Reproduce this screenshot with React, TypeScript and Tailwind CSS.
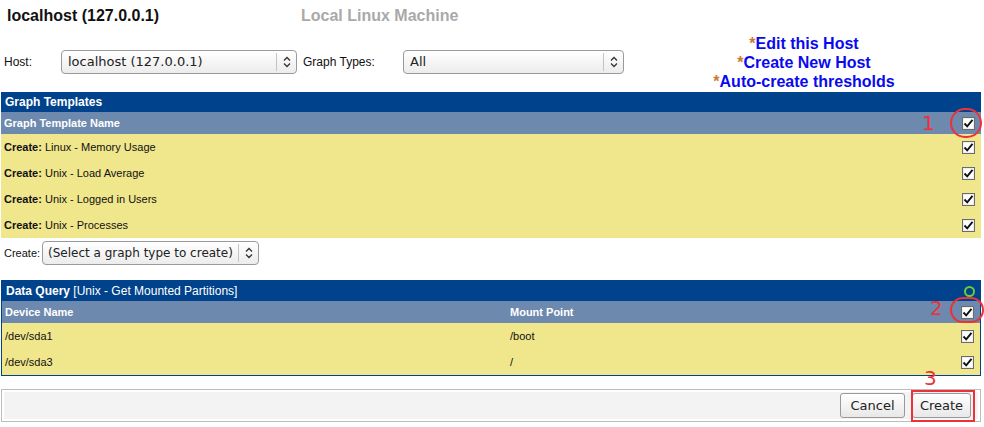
import React from 'react';

const sans = 'font-["Liberation_Sans",Arial,sans-serif]';
const deja = 'font-["DejaVu_Sans",sans-serif]';

function Check() {
  return (
    <span className="inline-flex h-[13px] w-[13px] items-center justify-center border border-[#6b6b6b] bg-white shadow-[inset_0_0_0_1px_#eee]">
      <svg width="11" height="11" viewBox="0 0 11 11">
        <path d="M1.5 5.5 L4.2 8.3 L9.5 1.8" fill="none" stroke="#111" strokeWidth="1.9" />
      </svg>
    </span>
  );
}

function Select({ value, className, textClass = 'text-[13px] pl-[6px]' }: { value: string; className: string; textClass?: string }) {
  return (
    <div
      className={`flex h-[24px] items-center rounded-[4px] border border-[#9a9a9a] bg-gradient-to-b from-white to-[#ececec] ${deja} text-[#222] ${className}`}
    >
      <span className={`flex-1 overflow-hidden whitespace-nowrap ${textClass}`}>{value}</span>
      <span className="flex h-[18px] w-[20px] shrink-0 items-center justify-center border-l border-[#c4c4c4]">
        <svg width="8" height="12" viewBox="0 0 8 12">
          <path d="M1 4.5 L4 1.5 L7 4.5 M1 7.5 L4 10.5 L7 7.5" fill="none" stroke="#333" strokeWidth="1.3" />
        </svg>
      </span>
    </div>
  );
}

function Ring({ className, label, labelClass }: { className: string; label: string; labelClass: string }) {
  return (
    <>
      <span className={`pointer-events-none absolute rounded-full border-[2.5px] border-[#ee3038] ${className}`} />
      <span className={`pointer-events-none absolute font-["DejaVu_Sans",sans-serif] text-[20px] leading-none text-[#ee3038] ${labelClass}`}>
        {label}
      </span>
    </>
  );
}

const templates = ['Linux - Memory Usage', 'Unix - Load Average', 'Unix - Logged in Users', 'Unix - Processes'];

export default function App() {
  return (
    <div className={`relative h-[427px] w-[984px] overflow-hidden bg-white ${sans} text-[11px] text-[#111]`}>
      <div className="flex h-[32px] items-center text-[16px] font-bold">
        <span className="w-[301px] pl-[7px] text-[#111]">localhost (127.0.0.1)</span>
        <span className="text-[#a9a9a9]">Local Linux Machine</span>
      </div>

      <div className="flex h-[60px] items-center">
        <span className="w-[61px] pl-[4px] text-[12px]">Host:</span>
        <Select value="localhost (127.0.0.1)" className="w-[236px]" />
        <span className="w-[106px] pl-[6px] text-[12px]">Graph Types:</span>
        <Select value="All" className="w-[221px]" />
        <div className="flex flex-1 flex-col items-center pt-[1px] text-[16px] font-bold leading-[19px] text-[#0a0aee]">
          <span><span className="text-[#cc7a33]">*</span>Edit this Host</span>
          <span><span className="text-[#cc7a33]">*</span>Create New Host</span>
          <span><span className="text-[#cc7a33]">*</span>Auto-create thresholds</span>
        </div>
      </div>

      <div className="ml-[1px] w-[980px]">
        <div className="flex h-[20px] items-center bg-[#00438c] pl-[4px] text-[12px] font-bold text-white">Graph Templates</div>
        <div className="flex h-[22px] items-center bg-[#6d89ae] pl-[3px] pr-[6px] font-bold text-white">
          <span className="flex-1">Graph Template Name</span>
          <Check />
        </div>
        {templates.map((t) => (
          <div key={t} className="flex h-[26px] items-center bg-[#f0e68c] pl-[3px] pr-[6px]">
            <span className="flex-1">
              <b>Create:</b> {t}
            </span>
            <Check />
          </div>
        ))}
      </div>

      <div className="flex h-[30px] items-center pl-[4px]">
        <span className="w-[38px]">Create:</span>
        <Select
          value="(Select a graph type to create)"
          className="h-[22px] w-[217px]"
          textClass="pl-[5px] text-[12px]"
        />
      </div>

      <div className="mt-[12px] ml-[1px] w-[980px] border border-[#00438c]">
        <div className="flex h-[20px] items-center bg-[#00438c] pl-[4px] pr-[5px] text-[12px] text-white">
          <span className="flex-1">
            <b>Data Query</b> [Unix - Get Mounted Partitions]
          </span>
          <span className="h-[11px] w-[11px] rounded-full border-[2px] border-[#6ccb3a]" />
        </div>
        <div className="flex h-[22px] items-center bg-[#6d89ae] pl-[3px] pr-[6px] font-bold text-white">
          <span className="w-[505px]">Device Name</span>
          <span className="flex-1">Mount Point</span>
          <Check />
        </div>
        {[
          ['/dev/sda1', '/boot'],
          ['/dev/sda3', '/'],
        ].map(([d, m]) => (
          <div key={d} className="flex h-[26px] items-center bg-[#f0e68c] pl-[3px] pr-[6px]">
            <span className="w-[505px]">{d}</span>
            <span className="flex-1">{m}</span>
            <Check />
          </div>
        ))}
      </div>

      <div className="mt-[13px] ml-[1px] w-[980px] border border-[#bcbcbc] p-[2px]">
        <div className={`flex h-[27px] items-center justify-end gap-[7px] bg-[#f3f3f3] pr-[7px] ${deja} text-[13px]`}>
          <button className="h-[25px] w-[65px] rounded-[3px] border border-[#999] bg-gradient-to-b from-white to-[#e8e8e8] text-[#222]">
            Cancel
          </button>
          <button className="h-[25px] w-[59px] rounded-[3px] border border-[#999] bg-gradient-to-b from-white to-[#e8e8e8] text-[#222]">
            Create
          </button>
        </div>
      </div>

      <Ring className="left-[950px] top-[108px] h-[30px] w-[32px]" label="1" labelClass="left-[922px] top-[113px]" />
      <Ring className="left-[950px] top-[297px] h-[26px] w-[34px]" label="2" labelClass="left-[930px] top-[298px]" />
      <span className="pointer-events-none absolute left-[911px] top-[390px] h-[32px] w-[64px] border-[2px] border-[#ee3038]" />
      <span className="pointer-events-none absolute left-[924px] top-[368px] font-['DejaVu_Sans',sans-serif] text-[20px] leading-none text-[#ee3038]">
        3
      </span>
    </div>
  );
}
